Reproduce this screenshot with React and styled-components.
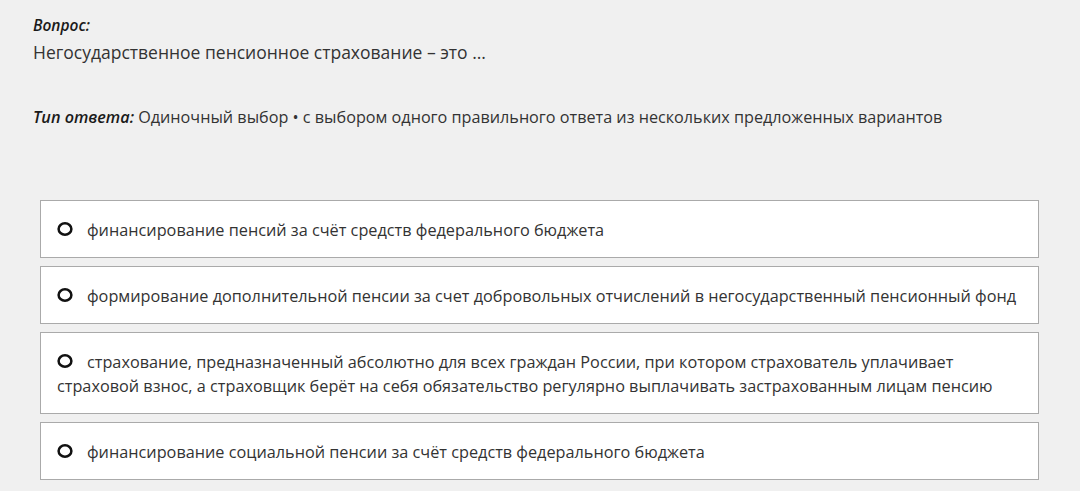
import React from "react";
import styled, { createGlobalStyle } from "styled-components";

const Global = createGlobalStyle`
  html, body { margin: 0; padding: 0; background: #f0f0f0; }
  body { font-family: "Open Sans", "Noto Sans", sans-serif; color: #222; }
`;

const Page = styled.div`
  padding: 14px 41px 0 33px;
`;

const Label = styled.div`
  font-size: 15.5px;
  font-style: italic;
  font-weight: 600;
  line-height: 22px;
  color: #1a1a1a;
`;

const Question = styled.div`
  margin-top: 2px;
  font-size: 17.5px;
  line-height: 28px;
  color: #333;
`;

const TypeLine = styled.div`
  margin-top: 40px;
  font-size: 16.2px;
  line-height: 22px;
  color: #333;
  b { font-style: italic; font-weight: 600; color: #1a1a1a; }
`;

const Options = styled.div`
  margin-top: 72px;
  margin-left: 7px;
  display: flex;
  flex-direction: column;
  gap: 8px;
`;

const Option = styled.div`
  background: #fff;
  border: 1px solid #aaa;
  padding: 17px 16px 15px 16px;
  font-size: 16.25px;
  line-height: 24px;
  color: #333;
`;

const RadioSvg = styled.svg`
  display: inline-block;
  width: 16px;
  height: 14px;
  margin-right: 14px;
  vertical-align: 0px;
`;

const Radio = () => (
  <RadioSvg viewBox="0 0 16 14">
    <ellipse cx="8" cy="7" rx="6.4" ry="5.7" fill="none" stroke="#111" strokeWidth="2.5" />
  </RadioSvg>
);

const options = [
  "финансирование пенсий за счёт средств федерального бюджета",
  "формирование дополнительной пенсии за счет добровольных отчислений в негосударственный пенсионный фонд",
  "страхование, предназначенный абсолютно для всех граждан России, при котором страхователь уплачивает страховой взнос, а страховщик берёт на себя обязательство регулярно выплачивать застрахованным лицам пенсию",
  "финансирование социальной пенсии за счёт средств федерального бюджета",
];

export default function App() {
  return (
    <>
      <Global />
      <Page>
        <Label>Вопрос:</Label>
        <Question>Негосударственное пенсионное страхование – это ...</Question>
        <TypeLine>
          <b>Тип ответа:</b> Одиночный выбор • с выбором одного правильного ответа из нескольких предложенных вариантов
        </TypeLine>
        <Options>
          {options.map((o) => (
            <Option key={o}>
              <Radio />
              {o}
            </Option>
          ))}
        </Options>
      </Page>
    </>
  );
}
